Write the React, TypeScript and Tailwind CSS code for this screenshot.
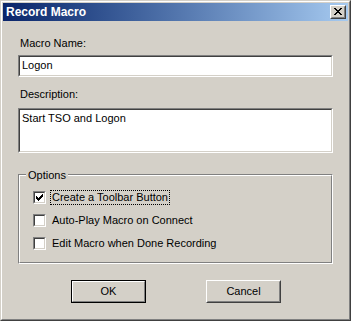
const font = { fontFamily: '"Liberation Sans", Arial, sans-serif' };

function Sunken({ className, children }: { className?: string; children?: React.ReactNode }) {
  return (
    <div className={`border border-t-[#808080] border-l-[#808080] border-r-white border-b-white ${className ?? ""}`}>
      <div className="h-full border border-t-[#404040] border-l-[#404040] border-r-[#d4d0c8] border-b-[#d4d0c8] bg-white pl-[2px] pt-[2px] leading-[13px]">
        {children}
      </div>
    </div>
  );
}

function CheckMark() {
  const cols = [2, 3, 4, 3, 2, 1, 0];
  return (
    <svg width="7" height="7" viewBox="0 0 7 7" shapeRendering="crispEdges">
      {cols.map((y, x) => (
        <rect key={x} x={x} y={y} width="1" height="3" fill="#000" />
      ))}
    </svg>
  );
}

function CloseGlyph() {
  const rows = [
    [0, 1, 6, 7],
    [1, 2, 5, 6],
    [2, 3, 4, 5],
    [3, 4],
    [2, 3, 4, 5],
    [1, 2, 5, 6],
    [0, 1, 6, 7],
  ];
  return (
    <svg width="8" height="7" viewBox="0 0 8 7" shapeRendering="crispEdges">
      {rows.map((r, y) => r.map((x) => <rect key={`${x}-${y}`} x={x} y={y} width="1" height="1" fill="#000" />))}
    </svg>
  );
}

function Checkbox({ label, checked, focused }: { label: string; checked?: boolean; focused?: boolean }) {
  return (
    <div className="flex items-center h-[13px]">
      <div className="w-[13px] h-[13px] border border-t-[#808080] border-l-[#808080] border-r-white border-b-white">
        <div className="h-full border border-t-[#404040] border-l-[#404040] border-r-[#d4d0c8] border-b-[#d4d0c8] bg-white flex items-center justify-center">
          {checked && <CheckMark />}
        </div>
      </div>
      <span
        className={`ml-[4px] pl-px pr-px leading-[13px] border border-dotted ${focused ? "border-black" : "border-transparent"}`}
      >
        {label}
      </span>
    </div>
  );
}

function Button({ label, isDefault }: { label: string; isDefault?: boolean }) {
  return (
    <div className={`w-[75px] h-[23px] ${isDefault ? "border border-black" : ""}`}>
      {isDefault ? (
        <div className="h-full border border-t-white border-l-white border-r-[#808080] border-b-[#808080] flex items-center justify-center leading-[13px]">
          {label}
        </div>
      ) : (
        <div className="h-full border border-t-white border-l-white border-r-[#404040] border-b-[#404040]">
          <div className="h-full border border-t-[#d4d0c8] border-l-[#d4d0c8] border-r-[#808080] border-b-[#808080] flex items-center justify-center leading-[13px]">
            {label}
          </div>
        </div>
      )}
    </div>
  );
}

export default function App() {
  return (
    <div
      className="w-[351px] h-[321px] border border-t-[#d4d0c8] border-l-[#d4d0c8] border-r-[#404040] border-b-[#404040] bg-[#d4d0c8] text-[11px] text-black"
      style={font}
    >
      <div className="h-full border border-t-white border-l-white border-r-[#808080] border-b-[#808080] p-px flex flex-col">
        <div className="h-[18px] flex items-center justify-between bg-linear-to-r from-[#0a246a] to-[#a6caf0] pl-[3px] pr-[2px]">
          <span className="text-white font-bold text-[12px] leading-[18px]">Record Macro</span>
          <div className="w-[16px] h-[14px] border border-t-white border-l-white border-r-[#404040] border-b-[#404040] bg-[#d4d0c8]">
            <div className="h-full border border-t-[#d4d0c8] border-l-[#d4d0c8] border-r-[#808080] border-b-[#808080] pl-[2px] pt-px">
              <CloseGlyph />
            </div>
          </div>
        </div>

        <div className="flex-1 px-[15px] flex flex-col">
          <div className="mt-[16px] pl-[2px] leading-[13px]">Macro Name:</div>
          <Sunken className="mt-[5px] h-[22px]">Logon</Sunken>

          <div className="mt-[11px] pl-[2px] leading-[13px]">Description:</div>
          <Sunken className="mt-[7px] h-[45px]">Start TSO and Logon</Sunken>

          <div className="relative mt-[21px] h-[90px] border border-t-[#808080] border-l-[#808080] border-r-white border-b-white">
            <div className="h-full border border-t-white border-l-white border-r-[#808080] border-b-[#808080] pl-[13px] pt-[15px] flex flex-col gap-[10px]">
              <Checkbox label="Create a Toolbar Button" checked focused />
              <Checkbox label="Auto-Play Macro on Connect" />
              <Checkbox label="Edit Macro when Done Recording" />
            </div>
            <span className="absolute left-[7px] top-[-6px] px-[2px] bg-[#d4d0c8] leading-[13px]">Options</span>
          </div>

          <div className="mt-[16px] ml-[53px] flex gap-[60px]">
            <Button label="OK" isDefault />
            <Button label="Cancel" />
          </div>
        </div>
      </div>
    </div>
  );
}
